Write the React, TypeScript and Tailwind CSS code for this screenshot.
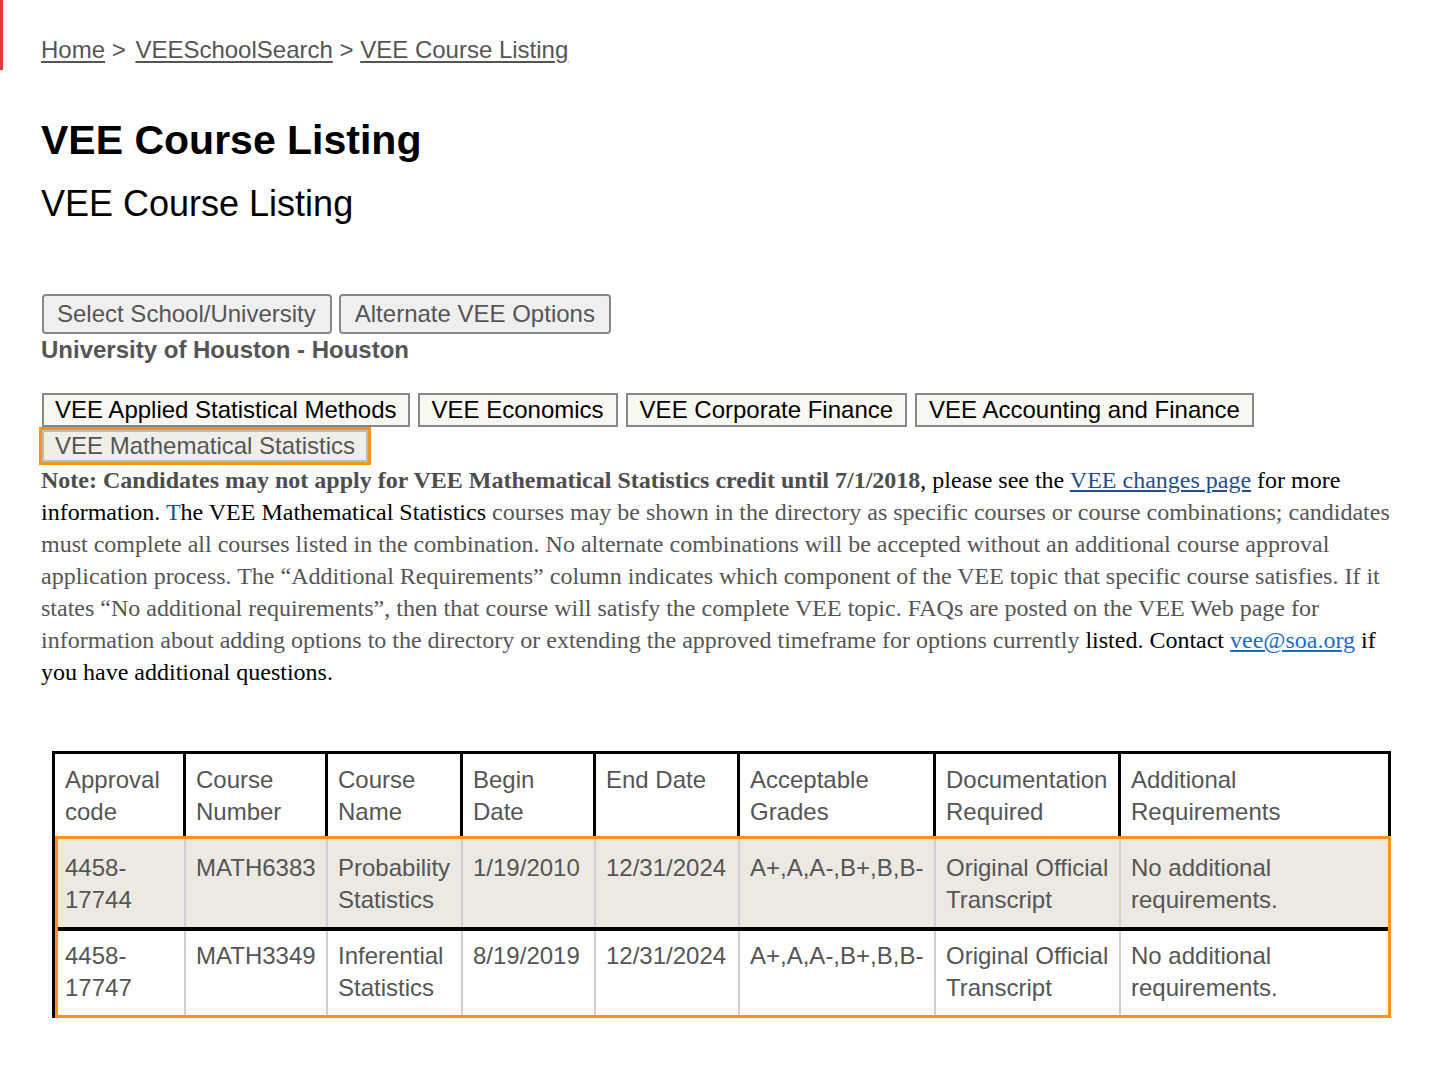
const sans = { fontFamily: '"Liberation Sans", Arial, sans-serif' }

const columns = [
    { label: ['Approval', 'code'], width: 'w-[131px]' },
    { label: ['Course', 'Number'], width: 'w-[142px]' },
    { label: ['Course', 'Name'], width: 'w-[135px]' },
    { label: ['Begin', 'Date'], width: 'w-[133px]' },
    { label: ['End Date'], width: 'w-[144px]' },
    { label: ['Acceptable', 'Grades'], width: 'w-[196px]' },
    { label: ['Documentation', 'Required'], width: 'w-[185px]' },
    { label: ['Additional', 'Requirements'], width: 'w-[267px]' },
]

const rows = [
    ['4458-17744', 'MATH6383', 'Probability Statistics', '1/19/2010', '12/31/2024', 'A+,A,A-,B+,B,B-', 'Original Official Transcript', 'No additional requirements.'],
    ['4458-17747', 'MATH3349', 'Inferential Statistics', '8/19/2019', '12/31/2024', 'A+,A,A-,B+,B,B-', 'Original Official Transcript', 'No additional requirements.'],
]

const topics = ['VEE Applied Statistical Methods', 'VEE Economics', 'VEE Corporate Finance', 'VEE Accounting and Finance']

function CourseTable() {
    return (
        <div className="relative ml-[11px] w-[1339px] border-[3px] border-black text-[24px] leading-[32px] text-[#555]" style={sans}>
            <div className="flex h-[82px]">
                {columns.map((col, i) => (
                    <div
                        key={col.label.join(' ')}
                        className={`${col.width} shrink-0 px-[10px] pt-[10px] ${i < columns.length - 1 ? 'border-r-[3px] border-black' : ''}`}
                    >
                        {col.label.map((w) => (
                            <div key={w}>{w}</div>
                        ))}
                    </div>
                ))}
            </div>
            {rows.map((row, r) => (
                <div key={row[0]} className={`flex ${r === 0 ? 'h-[95px] bg-[#ebe9e1] border-b-4 border-black' : 'h-[84px] bg-white'}`}>
                    {row.map((cell, i) => (
                        <div
                            key={i}
                            className={`${columns[i].width} shrink-0 px-[10px] ${r === 0 ? 'pt-[16px]' : 'pt-[9px]'} ${i < row.length - 1 ? 'border-r-2 border-[#cfcfcf]' : ''}`}
                        >
                            {i === 0 ? (
                                <>
                                    <div>{cell.split('-')[0]}-</div>
                                    <div>{cell.split('-')[1]}</div>
                                </>
                            ) : (
                                cell
                            )}
                        </div>
                    ))}
                </div>
            ))}
            {/* highlight round the result rows */}
            <div className="pointer-events-none absolute left-0 right-[-3px] top-[82px] bottom-[-3px] border-[3px] border-[#f7931e]" />
        </div>
    )
}

export default function App() {
    return (
        <div className="relative min-h-[1068px] bg-white pl-[41px]" style={sans}>
            <div className="absolute left-0 top-0 h-[70px] w-[3px] bg-[#e0393e]" />

            <nav className="pt-[36px] text-[24px] leading-[28px] text-[#555]">
                <a href="#" className="underline underline-offset-[3px]">Home</a>
                <span> &gt; </span>
                <a href="#" className="ml-[3px] underline underline-offset-[3px]">VEESchoolSearch</a>
                <span> &gt; </span>
                <a href="#" className="underline underline-offset-[3px]">VEE Course Listing</a>
            </nav>

            <h1 className="mt-[51px] text-[41px] font-bold leading-[50px] text-black">VEE Course Listing</h1>
            <h2 className="mt-[17px] text-[36px] leading-[44px] text-black">VEE Course Listing</h2>

            <div className="mt-[68px] ml-px flex gap-[7px]">
                <button className="h-[40px] rounded-[4px] border-2 border-[#888] bg-[#efefef] pl-[13px] pr-[14px] text-[24px] text-[#555]">
                    Select School/University
                </button>
                <button className="h-[40px] rounded-[4px] border-2 border-[#888] bg-[#efefef] px-[14px] text-[24px] text-[#555]">
                    Alternate VEE Options
                </button>
            </div>
            <div className="mt-px text-[24px] font-bold leading-[30px] text-[#555]">University of Houston - Houston</div>

            <div className="mt-[28px] ml-px flex w-[1240px] flex-wrap gap-x-[8px] gap-y-[3px]">
                {topics.map((t, i) => (
                    <button
                        key={t}
                        className={`h-[34px] border-2 border-[#888] bg-[#f8f7f2] ${i === 0 ? 'px-[11px]' : 'px-[12px]'} text-[24px] leading-[28px] text-black`}
                    >
                        {t}
                    </button>
                ))}
                <div className="relative">
                    <button className="h-[32px] border-2 border-[#bbb] bg-[#efeee9] px-[11px] text-[24px] leading-[28px] text-[#555]">
                        VEE Mathematical Statistics
                    </button>
                    <div className="pointer-events-none absolute -inset-[3px] border-[3px] border-[#f7931e]" />
                </div>
            </div>

            <p className="mt-[2px] w-[1360px] text-[24px] leading-[32px] text-[#555]" style={{ fontFamily: '"Liberation Serif", "Times New Roman", serif' }}>
                <b className="text-[#4d4d4d]">Note: Candidates may not apply for VEE Mathematical Statistics credit until 7/1/2018</b>
                <span className="text-black">, please see the </span>
                <a href="#" className="text-[#1f4e8c] underline">VEE changes page</a>
                <span className="text-black"> for more information. </span>
                <span className="text-[#1f4e8c]">T</span>
                <span className="text-black">he VEE Mathematical Statistics</span> courses may be shown in the directory as specific courses or course
                combinations; candidates must complete all courses listed in the combination. No alternate combinations will be accepted without an
                additional course approval application process. The “Additional Requirements” column indicates which component of the VEE topic that
                specific course satisfies. If it states “No additional requirements”, then that course will satisfy the complete VEE topic. FAQs are
                posted on the VEE Web page for information about adding options to the directory or extending the approved timeframe for options
                currently <span className="text-black">listed. Contact </span>
                <a href="#" className="text-[#1a6cc8] underline">vee@soa.org</a>
                <span className="text-black"> if you have additional questions.</span>
            </p>

            <div className="mt-[63px]">
                <CourseTable />
            </div>
        </div>
    )
}
